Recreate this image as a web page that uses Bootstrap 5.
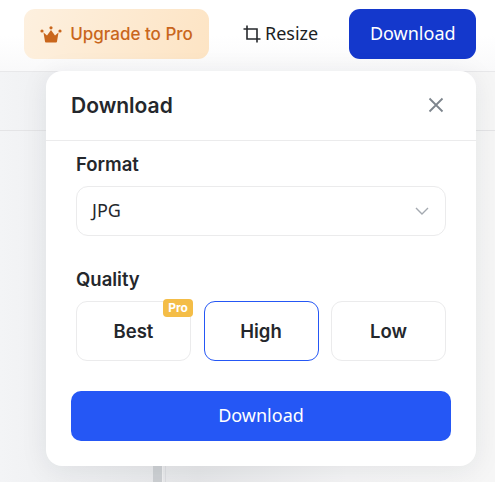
<!DOCTYPE html>
<html lang="en">
<head>
  <meta charset="UTF-8" />
  <meta name="viewport" content="width=device-width, initial-scale=1.0"/>
  <title>Download</title>
  <link href="https://cdn.jsdelivr.net/npm/bootstrap@5.3.0/dist/css/bootstrap.min.css" rel="stylesheet">
  <style>
    body {
      background-color: #f5f5f6;
      font-family: Inter, "Liberation Sans", sans-serif;
      color: #24272c;
      height: 482px;
      overflow: hidden;
    }
    .top-bar {
      height: 72px;
      padding: 9px 19px 0 24px;
      background: linear-gradient(#ffffff 50%, #f9f9fa);
      border-bottom: 1px solid #e8e8ea;
    }
    .btn-upgrade {
      flex: 0 0 185px;
      height: 50px;
      padding-top: 2px;
      border: 0;
      border-radius: 11px;
      color: #c9661c;
      font-size: 17px;
      font-weight: 500;
      background: linear-gradient(110deg, #fdf0df, #fde4c4);
    }
    .btn-resize {
      flex: 0 0 74px;
      height: 50px;
      margin-left: 34px;
      margin-right: 31px;
      border: 0;
      padding: 0;
      background: none;
      color: #1c1f24;
      font-family: "Noto Sans", sans-serif;
      font-size: 18px;
    }
    .btn-resize span {
      margin-bottom: 2px;
    }
    .btn-top-download {
      flex: 0 0 127px;
      height: 50px;
      padding-bottom: 3px;
      border: 0;
      border-radius: 11px;
      background: #1438cc;
      color: #fff;
      font-family: "Noto Sans", sans-serif;
      font-size: 18px;
    }
    .stage {
      height: 410px;
      background: linear-gradient(90deg, #f3f4f6, #e6e7e9 40%, #f4f4f5 70%, #f6f6f6);
    }
    .stage-rule {
      position: absolute;
      top: 130px;
      left: 0;
      right: 0;
      border-top: 1px solid #e4e4e6;
    }
    .stage-bar {
      position: absolute;
      top: 466px;
      bottom: 0;
      left: 153px;
      width: 10px;
      background: #cdd0d3;
      border-right: 1px solid #f0f0f1;
    }
    .stage-line {
      position: absolute;
      top: 466px;
      bottom: 0;
      left: 165px;
      width: 1px;
      background: #dcdde0;
    }
    .download-panel {
      position: absolute;
      top: 71px;
      left: 46px;
      width: 430px;
      height: 395px;
      background: #fff;
      border-radius: 16px;
      box-shadow: 0 4px 28px rgba(30, 35, 50, .08);
    }
    .panel-head {
      height: 70px;
      padding: 0 32px 0 25px;
      border-bottom: 1px solid #ebebec;
    }
    .panel-title {
      font-size: 21px;
      font-weight: 600;
      margin: 0;
    }
    .panel-close {
      margin-top: -1px;
    }
    .panel-body {
      padding: 11px 30px 0 30px;
    }
    .field-label {
      font-size: 18.5px;
      font-weight: 600;
      line-height: 24px;
      margin-bottom: 10px;
    }
    .format-box {
      height: 50px;
      padding: 0 16px 0 15px;
      border: 1px solid #ebebec;
      border-radius: 12px;
      font-family: "Noto Sans", sans-serif;
      font-size: 18px;
      margin-bottom: 31px;
    }
    .format-box span {
      margin-bottom: 2px;
    }
    .quality-opt {
      position: relative;
      width: 115px;
      height: 60px;
      padding: 2px 6px 0;
      border: 1px solid #ebebec;
      border-radius: 11px;
      background: #fff;
      color: #24272c;
      font-size: 18.5px;
      font-weight: 600;
    }
    .quality-opt.is-active {
      border-color: #2557f5;
    }
    .pro-tag {
      position: absolute;
      top: -3px;
      right: -3px;
      width: 30px;
      height: 18px;
      border-radius: 4px;
      background: #f4bd47;
      color: #fff;
      font-size: 12px;
      font-weight: 700;
      line-height: 18px;
      text-align: center;
    }
    .btn-panel-download {
      display: block;
      width: 380px;
      height: 50px;
      margin: 30px 0 0 25px;
      padding-bottom: 3px;
      border: 0;
      border-radius: 10px;
      background: #2557f5;
      color: #fff;
      font-family: "Noto Sans", sans-serif;
      font-size: 18px;
    }
  </style>
</head>
<body>
  <div class="top-bar d-flex align-items-start">
    <button class="btn-upgrade d-flex align-items-center justify-content-center gap-2">
      <svg width="22" height="18" viewBox="0 0 22 18" fill="#c9661c">
        <circle cx="2" cy="5" r="1.6"/>
        <circle cx="11" cy="1.8" r="1.6"/>
        <circle cx="20" cy="5" r="1.6"/>
        <path d="M3.5 6.5 L7 9.5 L11 4 L15 9.5 L18.5 6.5 L17 15.5 Q17 16.5 16 16.5 H6 Q5 16.5 5 15.5 Z"/>
      </svg>
      Upgrade to Pro
    </button>
    <button class="btn-resize d-flex align-items-center gap-1">
      <svg width="18" height="18" viewBox="0 0 18 18" fill="none" stroke="#26282c" stroke-width="1.6">
        <path d="M4 0.5 V14 H17.5"/>
        <path d="M0.5 4 H14 V17.5"/>
      </svg>
      <span>Resize</span>
    </button>
    <button class="btn-top-download">Download</button>
  </div>
  <div class="stage"></div>
  <div class="stage-rule"></div>
  <div class="stage-bar"></div>
  <div class="stage-line"></div>

  <div class="download-panel">
    <div class="panel-head d-flex align-items-center justify-content-between">
      <h5 class="panel-title">Download</h5>
      <svg class="panel-close" width="16" height="16" viewBox="0 0 16 16" stroke="#7e858d" stroke-width="1.8" fill="none">
        <path d="M1.5 1.5 L14.5 14.5 M14.5 1.5 L1.5 14.5"/>
      </svg>
    </div>
    <div class="panel-body">
      <div class="field-label">Format</div>
      <div class="format-box d-flex align-items-center justify-content-between">
        <span>JPG</span>
        <svg width="14" height="8" viewBox="0 0 14 8" fill="none" stroke="#a4a9b0" stroke-width="1.4">
          <path d="M1 1 L7 7 L13 1"/>
        </svg>
      </div>
      <div class="field-label">Quality</div>
      <div class="d-flex justify-content-between">
        <button class="quality-opt">Best<span class="pro-tag">Pro</span></button>
        <button class="quality-opt is-active">High</button>
        <button class="quality-opt">Low</button>
      </div>
    </div>
    <button class="btn-panel-download">Download</button>
  </div>
  <script src="https://cdn.jsdelivr.net/npm/bootstrap@5.3.0/dist/js/bootstrap.bundle.min.js"></script>
</body>
</html>
